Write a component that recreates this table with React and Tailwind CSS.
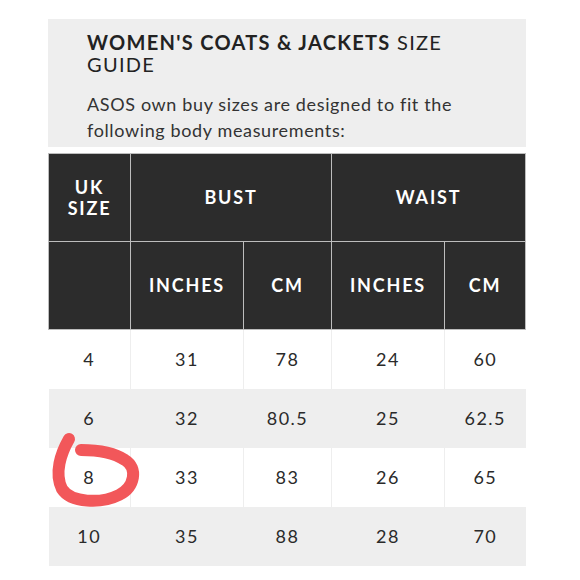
import React from 'react';

const rows = [
  ['4', '31', '78', '24', '60'],
  ['6', '32', '80.5', '25', '62.5'],
  ['8', '33', '83', '26', '65'],
  ['10', '35', '88', '28', '70'],
];

const App = () => {
  return (
    <div className="relative w-[580px] h-[580px] bg-white font-['Lato','Liberation_Sans',sans-serif] text-[#222]">
      <div className="pt-[19px] pl-[48px]">
        {/* Intro box */}
        <div className="w-[478px] bg-[#eeeeee] pl-[39px] pt-[12px] pb-[4px]">
          <h1 className="text-[20px] leading-[22px] uppercase tracking-[0.065em] text-[#222]">
            <span className="font-bold">Women's Coats &amp; Jackets</span> Size
            <br />
            Guide
          </h1>
          <p className="mt-[16px] text-[18px] leading-[26px] tracking-[0.035em] text-[#333]">
            ASOS own buy sizes are designed to fit the
            <br />
            following body measurements:
          </p>
        </div>

        {/* Size table */}
        <table className="mt-[6px] w-[477px] table-fixed border-collapse text-center">
          <colgroup>
            <col className="w-[82px]" />
            <col className="w-[113px]" />
            <col className="w-[88px]" />
            <col className="w-[113px]" />
            <col className="w-[81px]" />
          </colgroup>
          <thead className="bg-[#2c2c2c] text-white text-[18px] font-bold uppercase tracking-[0.1em]">
            <tr className="h-[88px]">
              <th className="border border-[#bdbdbd] leading-[21px]">UK<br />Size</th>
              <th colSpan={2} className="border border-[#bdbdbd]">Bust</th>
              <th colSpan={2} className="border border-[#bdbdbd]">Waist</th>
            </tr>
            <tr className="h-[88px]">
              <th className="border border-[#bdbdbd]"></th>
              <th className="border border-[#bdbdbd]">Inches</th>
              <th className="border border-[#bdbdbd]">Cm</th>
              <th className="border border-[#bdbdbd]">Inches</th>
              <th className="border border-[#bdbdbd]">Cm</th>
            </tr>
          </thead>
          <tbody className="text-[18px] tracking-[0.08em] text-[#2a2a2a]">
            {rows.map((r, i) => (
              <tr key={r[0]} className={i % 2 ? 'h-[59px] bg-[#eeeeee]' : 'h-[59px] bg-white'}>
                {r.map((v, j) => (
                  <td key={j} className={j < 4 ? 'border-r border-[#eeeeee]' : ''}>{v}</td>
                ))}
              </tr>
            ))}
          </tbody>
        </table>
      </div>

      {/* hand drawn marker round size 8 */}
      <svg className="absolute left-0 top-0 pointer-events-none" width="580" height="580" viewBox="0 0 580 580">
        <path
          d="M69 439 C 61 453, 54 473, 62 489 C 71 503, 101 504, 119 495 C 135 487, 138 468, 125 460 C 113 452, 95 450, 81 450"
          fill="none"
          stroke="#f2575a"
          strokeWidth="12"
          strokeLinecap="round"
          strokeLinejoin="round"
        />
      </svg>
    </div>
  );
};

export default App;
